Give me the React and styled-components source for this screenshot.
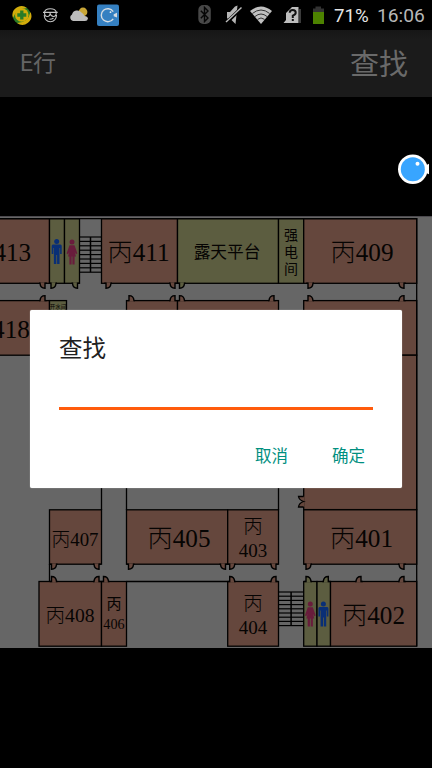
import React from "react";
import styled, { createGlobalStyle } from "styled-components";

const Global = createGlobalStyle`
  * { box-sizing: border-box; }
  body { margin: 0; background: #000; }
`;

const sans = '"Roboto", "Noto Sans CJK SC", sans-serif';

const Screen = styled.div`
  position: relative;
  display: flex;
  flex-direction: column;
  width: 432px;
  height: 768px;
  overflow: hidden;
  background: #000;
  font-family: ${sans};
`;

const StatusBar = styled.header`
  display: flex;
  justify-content: space-between;
  align-items: center;
  height: 30px;
  padding: 0 7px 0 12px;
`;

const IconGroup = styled.div`
  display: flex;
  align-items: center;
  height: 30px;
`;

const StatusText = styled.span`
  width: ${(p) => p.$w}px;
  margin-left: ${(p) => p.$gap}px;
  color: ${(p) => p.$color};
  font-size: ${(p) => p.$size}px;
  line-height: 30px;
  padding-top: 2px;
  white-space: nowrap;
`;

const AppBar = styled.nav`
  display: flex;
  justify-content: space-between;
  height: 67px;
  padding: 0 24px 0 20px;
  background: linear-gradient(#161616, #1b1b1b 10px);
  color: #646464;
`;

const AppTitle = styled.h1`
  margin: 0;
  font-size: 23px;
  font-weight: 400;
  line-height: 68px;
`;

const SearchAction = styled.button`
  border: 0;
  padding: 0;
  background: none;
  color: #6a6a6a;
  font-family: inherit;
  font-size: 29px;
  line-height: 71px;
`;

const MapArea = styled.main`
  flex: 1;
  padding-top: 119px;
`;

const FloorPlan = styled.svg`
  display: block;
  background: #666;
`;

const RoomText = styled.text`
  fill: #060403;
  font-size: ${(p) => p.$size}px;
  text-anchor: middle;
  font-family: "Liberation Serif", "Noto Sans CJK SC", serif;
  font-weight: ${(p) => (p.$sans ? 400 : 300)};
`;

const FloatingCamera = styled.svg`
  position: absolute;
  left: 396px;
  top: 152px;
`;

const Dialog = styled.section`
  position: absolute;
  left: 30px;
  top: 310px;
  display: flex;
  flex-direction: column;
  width: 372px;
  height: 178px;
  padding: 0 29px;
  border-radius: 2px;
  background: #fff;
  box-shadow: 0 0 1px #ddd;
`;

const DialogTitle = styled.h2`
  margin: 21px 0 0;
  height: 37px;
  color: #212121;
  font-size: 23.5px;
  font-weight: 400;
  line-height: 37px;
`;

const SearchInput = styled.input`
  width: 314px;
  height: 42px;
  padding: 0;
  border: 0;
  border-bottom: 3px solid #ff5b0c;
  outline: 0;
  background: transparent;
  font: 20px ${sans};
`;

const Actions = styled.div`
  display: flex;
  justify-content: flex-end;
  gap: 44px;
  padding: 34px 8px 0 0;
`;

const Action = styled.button`
  padding: 0;
  border: 0;
  background: none;
  color: #008f7f;
  font-family: inherit;
  font-size: 16.5px;
  font-weight: 400;
  line-height: 26px;
`;

const BRICK = "#65473d";
const OLIVE = "#5c5d40";

const rooms = [
  [-10, 218.7, 59.5, 64.6, BRICK],
  [49.5, 218.7, 15, 64.6, OLIVE],
  [64.5, 218.7, 15, 64.6, OLIVE],
  [101.5, 218.7, 76, 64.6, BRICK],
  [177.5, 218.7, 101, 64.6, OLIVE],
  [278.5, 218.7, 25.2, 64.6, OLIVE],
  [303.7, 218.7, 113, 64.6, BRICK],
  [-10, 300.6, 59.5, 54.6, BRICK],
  [49.5, 300.6, 17, 40, OLIVE],
  [126.5, 300.6, 51, 54.6, BRICK],
  [177.5, 300.6, 101, 54.6, BRICK],
  [303.7, 300.6, 113, 54.6, BRICK],
  [303.7, 355.2, 113, 154.4, BRICK],
  [49.5, 509.8, 52, 54.4, BRICK],
  [126.5, 509.8, 101.2, 54.4, BRICK],
  [227.7, 509.8, 50.8, 54.4, BRICK],
  [303.7, 509.8, 113, 54.4, BRICK],
  [39, 581.5, 62.5, 64.7, BRICK],
  [101.5, 581.5, 25, 64.7, BRICK],
  [227.7, 581.5, 50.8, 64.7, BRICK],
  [303.7, 581.5, 13.3, 64.7, OLIVE],
  [317, 581.5, 13.5, 64.7, OLIVE],
  [330.5, 581.5, 86.2, 64.7, BRICK],
];

/* x of the hinge, y of the wall, direction of the leaf, side it opens to, fill */
const doors = [
  [45, 283.3, -1, 1], [51, 283.3, 1, 1, OLIVE], [77.5, 283.3, -1, 1, OLIVE],
  [106, 283.3, 1, 1], [175, 283.3, -1, 1], [179.5, 283.3, 1, 1, OLIVE],
  [308, 283.3, 1, 1], [404, 283.3, -1, 1],
  [45, 300.6, -1, -1], [129, 300.6, 1, -1], [175, 300.6, -1, -1],
  [179.5, 300.6, 1, -1], [274, 300.6, -1, -1], [308, 300.6, 1, -1],
  [404, 300.6, -1, -1],
  [51.5, 564.2, 1, 1], [99, 564.2, -1, 1], [128.5, 564.2, 1, 1],
  [225.5, 564.2, -1, 1], [229.7, 564.2, 1, 1], [276, 564.2, -1, 1],
  [306, 564.2, 1, 1], [404, 564.2, -1, 1],
  [51.5, 581.5, 1, -1], [99, 581.5, -1, -1], [103.5, 581.5, 1, -1],
  [229.7, 581.5, 1, -1], [276, 581.5, -1, -1], [306, 581.5, 1, -1, OLIVE],
  [328.3, 581.5, -1, -1, OLIVE], [361, 581.5, -1, -1], [404, 581.5, -1, -1],
];

const labels = [
  [12.3, 261, 25.2, "413"], [138.5, 260.5, 25.2, "丙411"], [362, 260.5, 25.2, "丙409"],
  [11, 338, 25.2, "418"], [152, 330, 25.2, "丙"],
  [75, 546, 18.8, "丙407"], [179, 547, 25.2, "丙405"], [361.5, 547, 25.2, "丙401"],
  [253, 533, 19.5, "丙"], [253, 556.5, 19, "403"],
  [70, 622, 19.6, "丙408"], [114, 609, 15, "丙", true], [114, 628.5, 14.2, "406"],
  [253, 609.5, 19.5, "丙"], [253, 633.5, 19, "404"], [373.5, 624, 25.2, "丙402"],
  [227, 258.3, 16.7, "露天平台", true],
  [291, 240, 14, "强", true], [291, 257, 14, "电", true], [291, 274, 14, "间", true],
  [58, 309, 5.5, "开水间", true],
];

function Door({ data: [x, y, d, s, fill = BRICK] }) {
  return (
    <g transform={`translate(${x} ${y}) scale(${d} ${s})`}>
      <path d="M0-.8V5C3 5 4.6 3 5 0V-.8Z" fill={fill} />
      <path d="M-1.8 0H0V5C3 5 4.8 3 5 0H6" fill="none" stroke="#000" strokeWidth="1.4" />
    </g>
  );
}

function Person({ x, y, female }) {
  return (
    <g transform={`translate(${x} ${y})`} fill={female ? "#691c3c" : "#092f76"}>
      <circle cx="0" cy="2.6" r="2.5" />
      {female ? (
        <path d="M-2.5 5.7H2.5L5.4 14 4 14.7 2.6 12 4 17H2.6V25H.4V17H-.4V25H-2.6V17H-4L-2.6 12-4 14.7-5.4 14Z" />
      ) : (
        <path d="M-3.8 5.5H3.8Q5 5.5 5 7V15H3.4V9H2.8V25H.4V16H-.4V25H-2.8V9H-3.4V15H-5V7Q-5 5.5-3.8 5.5Z" />
      )}
    </g>
  );
}

function Stairs({ x, y, w, steps, gap }) {
  const h = (steps - 1) * gap;
  return (
    <g stroke="#000" strokeWidth="1.2">
      {Array.from({ length: steps }, (_, i) => (
        <path key={i} d={`M${x} ${y + i * gap}h${w}`} />
      ))}
      <path d={`M${x + w / 2} ${y}v${h}`} strokeWidth="1.5" />
    </g>
  );
}

function Plan() {
  return (
    <FloorPlan width="432" height="432" viewBox="0 216 432 432">
      <path d="M0 216.5H432" stroke="#4b494e" />
      <g stroke="#000" strokeWidth="1.3">
        {rooms.map(([x, y, w, h, fill], i) => (
          <rect key={i} x={x} y={y} width={w} height={h} fill={fill} />
        ))}
      </g>
      <g fill="none" stroke="#000" strokeWidth="1.3">
        <path d="M0 218.7H416.7V646.2" />
        <path d="M101.5 480V510M126.5 355V510M278.5 355V510M49.5 564V581.5M126.5 581.5H227.7" />
      </g>
      {doors.map((d, i) => <Door key={i} data={d} />)}
      <path d="M304.5 496.5H298.5Q299 500 302 501.3Q299 503 298.5 507H304.5Z" fill={BRICK} />
      <path d="M303.7 496.5H298.5Q299 500 303.7 501.5Q299 503 298.5 507H303.7" fill="none" stroke="#000" strokeWidth="1.3" />
      <Stairs x={79.5} y={237} w={22} steps={9} gap={4.4} />
      <Stairs x={278.5} y={592} w={25.2} steps={9} gap={4.2} />
      <Person x={56.7} y={239} />
      <Person x={72} y={239.5} female />
      <Person x={310.3} y={601.5} female />
      <Person x={323.4} y={601.5} />
      {labels.map(([x, y, size, text, isSans], i) => (
        <RoomText key={i} x={x} y={y} $size={size} $sans={isSans}>{text}</RoomText>
      ))}
    </FloorPlan>
  );
}

function LeftIcons() {
  return (
    <svg width="110" height="30" viewBox="12 0 110 30">
      <circle cx="21.7" cy="15.3" r="9" fill="#2d7d24" />
      <path d="M13 18A9 9 0 0 1 27 8Q17 8 13 18ZM30.5 12A9 9 0 0 1 17 23Q28 23 30.5 12Z" fill="#d3ac0b" />
      <circle cx="21.8" cy="15" r="6.8" fill="#d0ac09" />
      <path d="M21.8 10.5V19.5M17.3 15H26.3" stroke="#287b28" strokeWidth="3.3" />
      <g fill="none" stroke="#c4c4c4" strokeWidth="1.1">
        <path d="M44.3 12.5Q45 8.7 50.3 8.7T56.5 12.5M43 12.4H57.7M44.2 15Q44.6 21.5 50.4 21.7Q56 21.5 56.6 15M49.5 19.3Q52 19.3 53.5 18" />
        <path d="M44.5 12.5Q44.5 16.5 47.3 16.5T50 13.2Q50.8 16.5 53.5 16.5T56.3 12.5" />
      </g>
      <circle cx="83" cy="12" r="4.4" fill="#c8a637" />
      <path d="M73 21A3.5 3.5 0 0 1 72 14.5A5.4 5.4 0 0 1 81.5 12.5Q84 14 84.5 16Q87.5 16 88 18.5Q87.5 21 85 21Z" fill="#bcbcbc" />
      <rect x="97" y="4.5" width="22" height="21.5" rx="2" fill="#3580c1" />
      <path d="M113.2 11.6A6.5 6.5 0 1 0 113.2 18.8" fill="none" stroke="#d5dce2" strokeWidth="1.4" />
      <path d="M113.7 14.2L117 12.8V17.4L113.7 16.2Z" fill="#d5dce2" />
      <circle cx="110.5" cy="12.2" r=".9" fill="#e7edf2" />
    </svg>
  );
}

function RightIcons() {
  return (
    <svg width="128" height="30" viewBox="198 0 128 30">
      <rect x="198.3" y="5" width="12.5" height="19" rx="5" fill="#484848" />
      <path d="M200.8 10.8L208 18 204.5 21.5V7.5L208 11 200.8 18.2" fill="none" stroke="#050505" strokeWidth="1.4" />
      <path d="M227 12H230L235 6.5 237.5 5.5 235.5 24 230 18.5H227Z" fill="#b6b6b6" />
      <path d="M226.5 22.5L241.5 8" stroke="#000" strokeWidth="3.5" />
      <path d="M226 22L241.5 7.5" stroke="#bababa" strokeWidth="1.4" />
      <path d="M250 11Q261 2 272 11L261 24Z" fill="#c1c1c1" />
      <path d="M252.3 13.5Q261 6.5 269.7 13.5M255 16.5Q261 11.5 267 16.5M257.5 19.4Q261 16.5 264.5 19.4" stroke="#222" strokeWidth=".9" fill="none" />
      <path d="M283.5 23L286 20V13L292 7H298.5V23Z" fill="#bdbdbd" />
      <path d="M300 9V23" stroke="#777" />
      <path d="M289.7 12.8Q289.7 10 292.7 10T295.7 12.7Q295.7 14.4 292.8 15.6V18M292.8 19V21" stroke="#111" strokeWidth="2" fill="none" />
      <path d="M313 8.5H315.5V6.5H321V8.5H324V24H313Z" fill="#333" />
      <rect x="313" y="12" width="11" height="12" fill="#4d8200" />
    </svg>
  );
}

export default function App() {
  return (
    <>
      <Global />
      <Screen>
        <StatusBar>
          <IconGroup><LeftIcons /></IconGroup>
          <IconGroup>
            <RightIcons />
            <StatusText $w={36} $gap={8} $size={18.7} $color="#e5e5e5">71%</StatusText>
            <StatusText $w={48} $gap={7} $size={19.2} $color="#b7b7b7">16:06</StatusText>
          </IconGroup>
        </StatusBar>
        <AppBar>
          <AppTitle>E行</AppTitle>
          <SearchAction>查找</SearchAction>
        </AppBar>
        <MapArea><Plan /></MapArea>
        <FloatingCamera width="36" height="34" viewBox="396 152 36 34">
          <circle cx="412.8" cy="169.2" r="14.8" fill="#fff" />
          <path d="M424 166.2L429 163.7V174.3L424 172Z" fill="#fff" />
          <circle cx="412.8" cy="169.2" r="12" fill="#38a5ff" />
          <circle cx="417.5" cy="163.7" r="2" fill="#fff" />
        </FloatingCamera>
        <Dialog role="dialog">
          <DialogTitle>查找</DialogTitle>
          <SearchInput aria-label="查找" />
          <Actions>
            <Action>取消</Action>
            <Action>确定</Action>
          </Actions>
        </Dialog>
      </Screen>
    </>
  );
}
